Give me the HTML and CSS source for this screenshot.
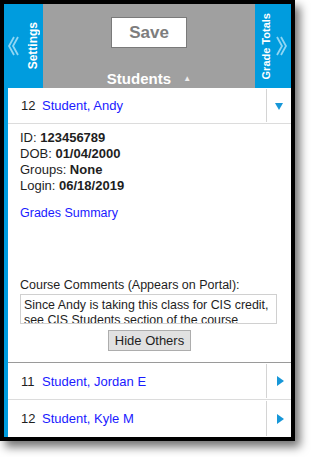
FILE: index.html
```html
<!DOCTYPE html>
<html>
<head>
<meta charset="utf-8">
<link rel="stylesheet" href="styles.css">
</head>
<body>
<div class="frame">
  <div class="header">
    <div class="tab tab-left">
      <svg class="chev" width="11" height="20" viewBox="0 0 11 20"><polyline points="6,1 1,10 6,19" /><polyline points="10,1 5,10 10,19" /></svg>
      <span class="tab-text tab-text-settings">Settings</span>
    </div>
    <div class="mid">
      <button class="save">Save</button>
      <div class="students">Students <span class="sort">&#9650;</span></div>
    </div>
    <div class="tab tab-right">
      <span class="tab-text tab-text-totals">Grade Totals</span>
      <svg class="chev" width="11" height="20" viewBox="0 0 11 20"><polyline points="1,1 6,10 1,19" /><polyline points="5,1 10,10 5,19" /></svg>
    </div>
  </div>
  <div class="list">
    <div class="row">
      <div class="row-main"><span class="num">12</span><span class="name">Student, Andy</span></div>
      <div class="row-toggle"><span class="tri-down"></span></div>
    </div>
    <div class="details">
      <div class="line">ID: <b>123456789</b></div>
      <div class="line">DOB: <b>01/04/2000</b></div>
      <div class="line">Groups: <b>None</b></div>
      <div class="line">Login: <b>06/18/2019</b></div>
      <span class="summary">Grades Summary</span>
      <div class="comments-label">Course Comments (Appears on Portal):</div>
      <div class="comments">Since Andy is taking this class for CIS credit, see CIS Students section of the course syllabus.</div>
      <div class="btn-wrap"><button class="hide">Hide Others</button></div>
    </div>
    <div class="row row-sep">
      <div class="row-main"><span class="num">11</span><span class="name">Student, Jordan E</span></div>
      <div class="row-toggle"><span class="tri-right"></span></div>
    </div>
    <div class="row row-last">
      <div class="row-main"><span class="num">12</span><span class="name">Student, Kyle M</span></div>
      <div class="row-toggle"><span class="tri-right"></span></div>
    </div>
  </div>
</div>
</body>
</html>
```
FILE: styles.css
```css
* { box-sizing: border-box; }
html, body { margin: 0; padding: 0; background: #fff; }
body { width: 311px; height: 457px; overflow: hidden; font-family: "Liberation Sans", Arial, sans-serif; font-size: 13px; color: #1e1e1e; }

.frame {
  width: 295px;
  height: 441px;
  border: 4px solid #000;
  background: #fff;
  display: flex;
  flex-direction: column;
  box-shadow: 5px 6px 9px rgba(0,0,0,0.55);
}

.header { height: 84px; display: flex; flex: none; }
.tab { background: #009cde; display: flex; align-items: center; }
.tab-left { width: 39px; padding-left: 4px; gap: 8px; }
.tab-right { width: 36px; padding-left: 5px; gap: 4px; }
.tab-text {
  color: #fff;
  font-weight: bold;
  writing-mode: vertical-rl;
  transform: rotate(180deg);
  line-height: 13px;
  white-space: nowrap;
}
.tab-text-settings { font-size: 12px; }
.tab-text-totals { font-size: 11px; line-height: 12px; }
.chev polyline { fill: none; stroke: #8fd6f4; stroke-width: 1.8; }

.mid { flex: 1; background: #a0a0a0; display: flex; flex-direction: column; align-items: center; padding-top: 13px; }
.save {
  width: 76px; height: 31px;
  background: #fff;
  border: 1px solid #7a7a7a;
  font-family: "Liberation Sans", Arial, sans-serif;
  font-size: 17px; font-weight: bold; color: #7d7d7d;
  padding: 0;
}
.students { margin-top: 22px; color: #fff; font-weight: bold; font-size: 15px; line-height: 18px; white-space: nowrap; }
.sort { font-size: 8px; color: #eee; vertical-align: 3px; margin-left: 8px; }

.list { flex: 1; display: flex; flex-direction: column; border-left: 4px solid #009cde; }
.row { display: flex; height: 36px; border-bottom: 1px solid #dcdcdc; flex: none; }
.row-main { flex: 1; display: flex; align-items: center; padding-left: 13px; white-space: nowrap; }
.num { width: 21px; flex: none; }
.name { color: #1a1aff; white-space: nowrap; }
.row-toggle { width: 25px; flex: none; border-left: 1px solid #d4d4d4; display: flex; align-items: center; justify-content: center; margin: 1px 0; }
.tri-down { width: 0; height: 0; border-left: 4px solid transparent; border-right: 4px solid transparent; border-top: 7px solid #1797d8; margin-top: 2px; }
.tri-right { width: 0; height: 0; border-top: 5px solid transparent; border-bottom: 5px solid transparent; border-left: 7px solid #1797d8; margin-left: 2px; }

.details { padding: 6px 0 11px 12px; display: flex; flex-direction: column; flex: none; }
.line { line-height: 16px; }
.line b { font-weight: bold; }
.summary { color: #1a1aff; font-size: 12.5px; line-height: 16px; margin-top: 11px; }
.comments-label { font-size: 12.5px; line-height: 16px; margin-top: 56px; }
.comments {
  margin-top: 1px;
  width: 257px; height: 30px;
  border: 1px solid #d0d0d0;
  padding: 3px 0 0 3px;
  font-size: 12.4px;
  line-height: 15px;
  overflow: hidden;
  color: #1e1e1e;
}
.btn-wrap { display: flex; justify-content: center; padding-right: 12px; margin-top: 6px; }
.hide {
  width: 83px; height: 21px;
  background: #e1e1e1;
  border: 1px solid #adadad;
  font-family: "Liberation Sans", Arial, sans-serif;
  font-size: 13px; color: #1e1e1e; padding: 0;
}
.row-sep { border-top: 1px solid #9a9a9a; height: 38px; }
.row-last { border-bottom: none; flex: 1; }
```
